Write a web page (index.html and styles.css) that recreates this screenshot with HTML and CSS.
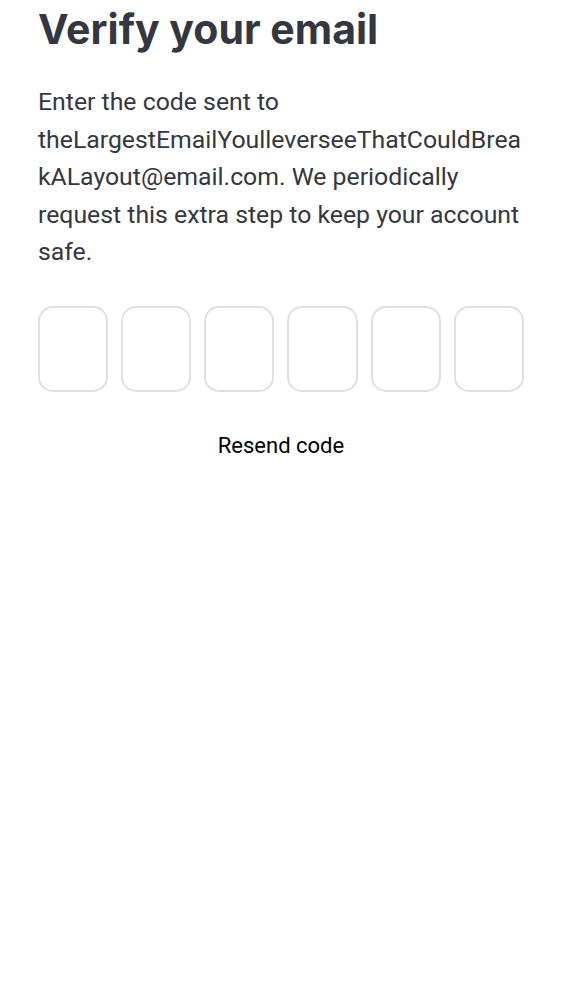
FILE: index.html
```html
<!DOCTYPE html>
<html>
<head>
<meta charset="utf-8">
<link rel="stylesheet" href="styles.css">
</head>
<body>
<main class="page">
  <h1 class="title">Verify your email</h1>
  <p class="desc">Enter the code sent to theLargestEmailYoulleverseeThatCouldBreakALayout@email.com. We periodically request this extra step to keep your account safe.</p>
  <div class="code">
    <div class="cell"></div>
    <div class="cell"></div>
    <div class="cell"></div>
    <div class="cell"></div>
    <div class="cell"></div>
    <div class="cell"></div>
  </div>
  <div class="resend">Resend code</div>
</main>
</body>
</html>
```
FILE: styles.css
```css
html, body {
  margin: 0;
  padding: 0;
  background: #fff;
}
body {
  font-family: Roboto, "Liberation Sans", sans-serif;
}
.page {
  padding: 0 38px;
}
.title {
  margin: 0;
  font-family: Inter, Roboto, sans-serif;
  font-size: 41px;
  line-height: 58px;
  font-weight: 700;
  color: #343741;
}
.desc {
  margin: 25px 0 0;
  font-size: 24.8px;
  line-height: 37.5px;
  color: #343741;
  overflow-wrap: anywhere;
}
.code {
  margin-top: 35px;
  display: grid;
  grid-template-columns: repeat(6, 1fr);
  gap: 13px;
}
.cell {
  height: 86px;
  box-sizing: border-box;
  border: 2px solid #dde0e5;
  border-radius: 15px;
}
.resend {
  margin-top: 41px;
  text-align: center;
  font-size: 22px;
  line-height: 26px;
  color: #000;
}
```
